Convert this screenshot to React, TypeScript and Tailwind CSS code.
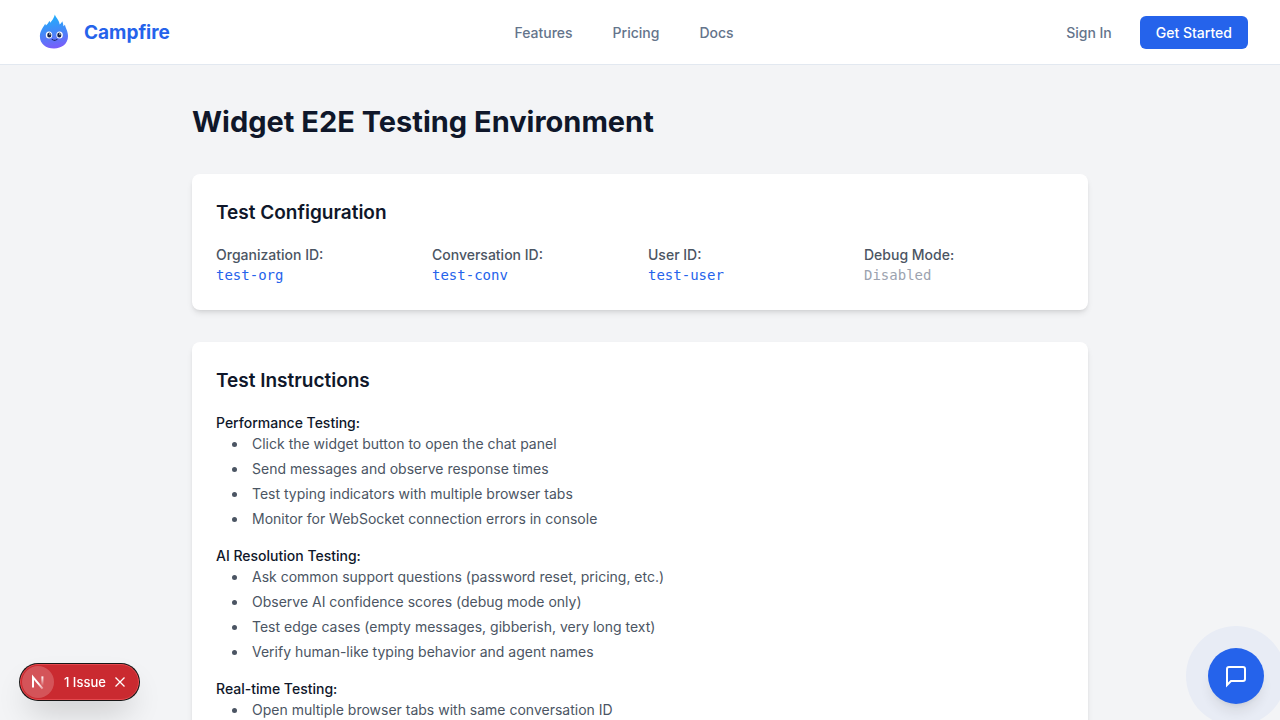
import type { ReactNode } from "react";

const navLinks = ["Features", "Pricing", "Docs"];

const config = [
  { label: "Organization ID:", value: "test-org", active: true },
  { label: "Conversation ID:", value: "test-conv", active: true },
  { label: "User ID:", value: "test-user", active: true },
  { label: "Debug Mode:", value: "Disabled", active: false },
];

const instructions = [
  {
    title: "Performance Testing:",
    items: [
      "Click the widget button to open the chat panel",
      "Send messages and observe response times",
      "Test typing indicators with multiple browser tabs",
      "Monitor for WebSocket connection errors in console",
    ],
  },
  {
    title: "AI Resolution Testing:",
    items: [
      "Ask common support questions (password reset, pricing, etc.)",
      "Observe AI confidence scores (debug mode only)",
      "Test edge cases (empty messages, gibberish, very long text)",
      "Verify human-like typing behavior and agent names",
    ],
  },
  {
    title: "Real-time Testing:",
    items: ["Open multiple browser tabs with same conversation ID"],
  },
];

function FlameLogo() {
  return (
    <svg className="h-9 w-9" viewBox="0 0 36 36" aria-hidden="true">
      <defs>
        <linearGradient id="flame" x1="0.45" y1="0" x2="0.6" y2="1">
          <stop offset="0" stopColor="#1fb0fd" />
          <stop offset="0.5" stopColor="#4489f8" />
          <stop offset="1" stopColor="#7c5cfa" />
        </linearGradient>
      </defs>
      <path
        d="M18.9 0.6C19.4 3.4 22.8 5.4 23.7 10.4C24.9 9.6 25.6 8.7 26.2 7.2C27 8.8 27.3 10.4 27.4 12.2C28 11.8 28.5 11.4 29 10.8C29.4 14 32 17 32 22.2C32 29.8 25.8 34.4 18 34.4C10 34.4 3.9 29.8 3.9 22.4C3.9 17.6 6.4 14.4 9.2 9.8C9.6 10.4 9.8 11 9.9 11.6C11.4 10.2 12.4 8.8 13.4 6.8C13.8 7.4 14 8 14.1 8.8C16.2 6.8 17.8 4.4 18.9 0.6Z"
        fill="url(#flame)"
      />
      <ellipse cx="13" cy="21" rx="3.2" ry="3.6" fill="#fff" />
      <ellipse cx="23.6" cy="21" rx="3.2" ry="3.6" fill="#fff" />
      <ellipse cx="13.3" cy="21" rx="2.1" ry="2.6" fill="#17264f" />
      <ellipse cx="23.3" cy="21" rx="2.1" ry="2.6" fill="#17264f" />
      <circle cx="13.9" cy="20" r="0.7" fill="#fff" />
      <circle cx="23.9" cy="20" r="0.7" fill="#fff" />
      <path d="M16.2 25.4Q18.6 27.4 21 25.4" fill="none" stroke="#1e2b6b" strokeWidth="1.1" strokeLinecap="round" />
    </svg>
  );
}

function Card({ title, children }: { title: string; children: ReactNode }) {
  return (
    <section className="mb-8 rounded-lg bg-white p-6 shadow-md">
      <h2 className="mb-4 text-[19px] leading-[30px] font-semibold">{title}</h2>
      {children}
    </section>
  );
}

export default function App() {
  return (
    <div className="min-h-screen bg-gray-100 font-['Inter',sans-serif] text-sm leading-[21px] text-[#0f172a]">
      <header className="border-b border-[#e2e8f0] bg-white">
        <div className="flex h-16 items-center justify-between px-8">
          <a href="#" className="flex items-center gap-3 pr-3 pl-1">
            <FlameLogo />
            <span className="text-[19px] font-bold text-[#2563eb]">Campfire</span>
          </a>
          <nav className="flex items-center gap-10 font-medium text-[#64748b]">
            {navLinks.map((link) => (
              <a key={link} href="#">
                {link}
              </a>
            ))}
          </nav>
          <div className="flex items-center gap-7 font-medium">
            <a href="#" className="text-[#64748b]">
              Sign In
            </a>
            <button type="button" className="rounded-md bg-[#2563eb] px-4 py-1.5 text-white">
              Get Started
            </button>
          </div>
        </div>
      </header>

      <main className="mx-auto max-w-4xl pt-[34px] pb-4">
        <h1 className="mb-[30px] text-[29px] leading-[45px] font-bold">Widget E2E Testing Environment</h1>

        <Card title="Test Configuration">
          <dl className="grid grid-cols-4 gap-4">
            {config.map(({ label, value, active }) => (
              <div key={label}>
                <dt className="font-medium text-[#4b5563]">{label}</dt>
                <dd
                  className={
                    active
                      ? "font-['DejaVu_Sans_Mono',monospace] text-[#2563eb]"
                      : "font-['DejaVu_Sans_Mono',monospace] text-[#9ca3af]"
                  }
                >
                  {value}
                </dd>
              </div>
            ))}
          </dl>
        </Card>

        <Card title="Test Instructions">
          <div className="space-y-4">
            {instructions.map(({ title, items }) => (
              <div key={title}>
                <h3 className="font-medium">{title}</h3>
                <ul className="ml-4 list-inside list-disc space-y-1 text-[#4b5563]">
                  {items.map((item) => (
                    <li key={item}>{item}</li>
                  ))}
                </ul>
              </div>
            ))}
          </div>
        </Card>
      </main>

      <div className="fixed bottom-5 left-5 flex h-9 items-center rounded-full border border-[#e5484d] bg-[#ca2a30] pr-3 pl-px text-[13px] font-medium text-white shadow-[0_0_0_1px_#171717,0_16px_32px_-8px_rgba(0,0,0,0.24)]">
        <button
          type="button"
          aria-label="Open developer tools"
          className="flex size-8 items-center justify-center rounded-full bg-white/20"
        >
          <svg className="size-4" viewBox="0 0 16 16" fill="none" aria-hidden="true">
            <defs>
              <linearGradient id="n-bar" x1="0" y1="0" x2="0" y2="1">
                <stop stopColor="#fff" />
                <stop offset="1" stopColor="#fff" stopOpacity="0" />
              </linearGradient>
              <linearGradient id="n-diagonal" gradientUnits="userSpaceOnUse" x1="9" y1="9" x2="14" y2="15">
                <stop stopColor="#fff" />
                <stop offset="1" stopColor="#fff" stopOpacity="0.3" />
              </linearGradient>
            </defs>
            <path d="M3 13.6V3.2L12.6 14.6" stroke="url(#n-diagonal)" strokeWidth="2" />
            <rect x="11.4" y="2.4" width="2" height="9.5" fill="url(#n-bar)" />
          </svg>
        </button>
        <button type="button" className="pr-2 pl-2.5">
          1 Issue
        </button>
        <button type="button" aria-label="Hide issues">
          <svg className="size-3" viewBox="0 0 12 12" stroke="#fff" strokeWidth="1.3" fill="none" aria-hidden="true">
            <path d="M1.5 1.5L10.5 10.5M10.5 1.5L1.5 10.5" />
          </svg>
        </button>
      </div>

      <button
        type="button"
        aria-label="Open chat"
        className="fixed right-4 bottom-4 flex size-14 items-center justify-center rounded-full bg-[#2563eb] text-white shadow-[0_0_0_22px_rgba(37,99,235,0.05),0_10px_15px_-3px_rgba(0,0,0,0.1),0_4px_6px_-4px_rgba(0,0,0,0.1)]"
      >
        <svg
          className="size-6"
          viewBox="0 0 24 24"
          fill="none"
          stroke="currentColor"
          strokeWidth="2"
          strokeLinecap="square"
          strokeLinejoin="miter"
          aria-hidden="true"
        >
          <path d="M21 15a2 2 0 0 1-2 2H7l-4 4V5a2 2 0 0 1 2-2h14a2 2 0 0 1 2 2z" />
        </svg>
      </button>
    </div>
  );
}
